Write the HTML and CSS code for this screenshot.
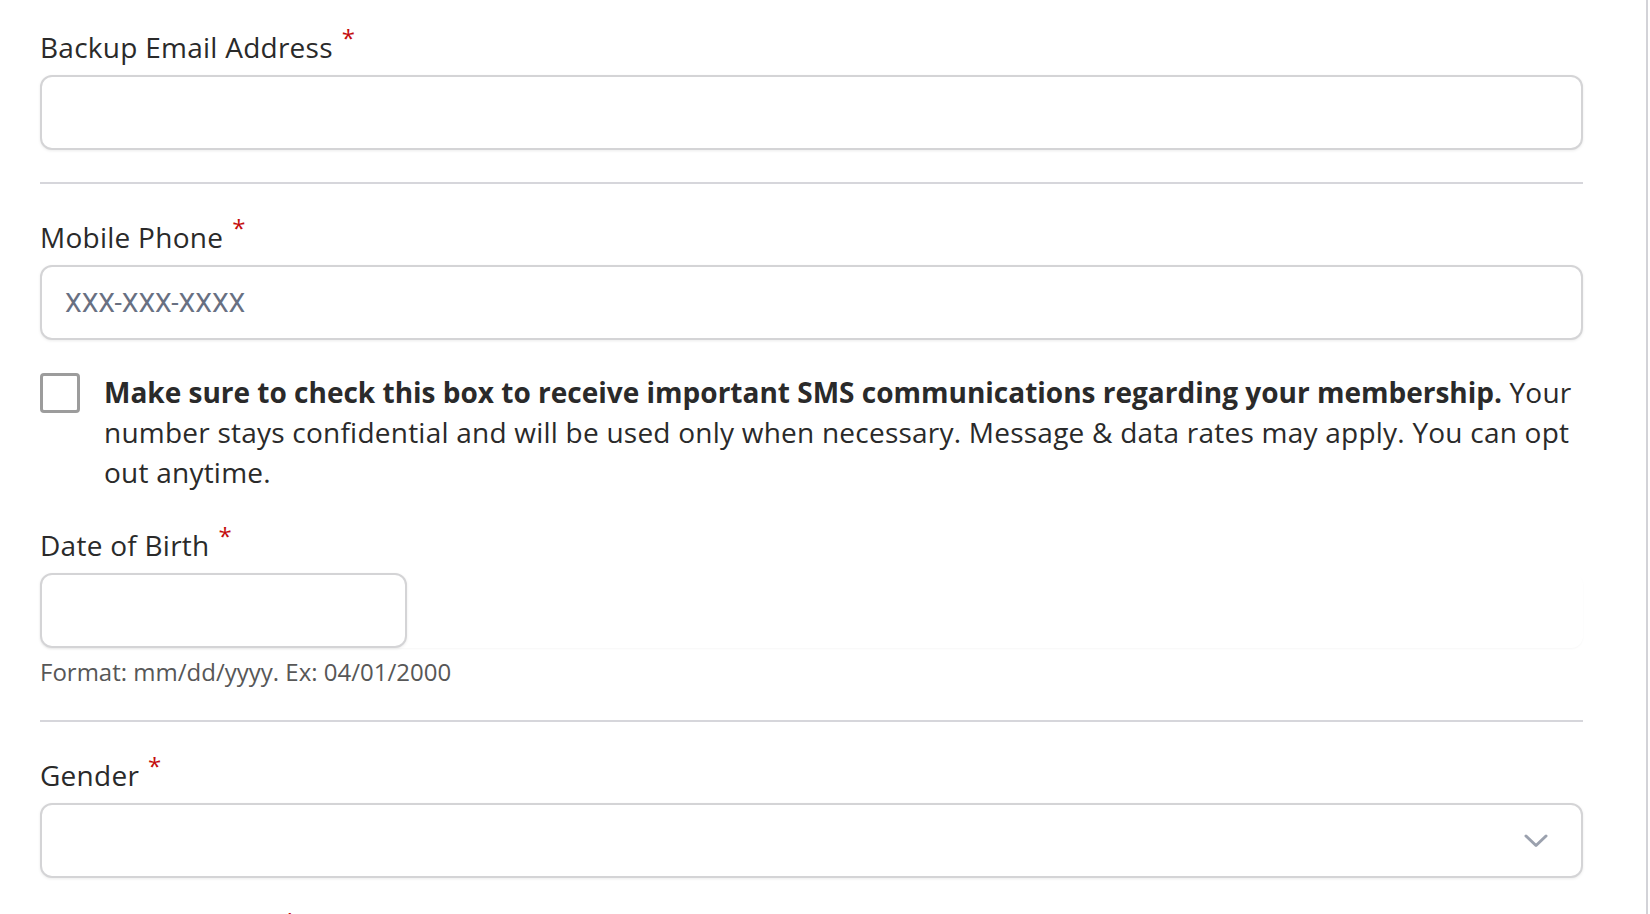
FILE: index.html
```html
<!DOCTYPE html>
<html lang="en">
<head>
<meta charset="utf-8">
<title>Member Details</title>
<link rel="stylesheet" href="styles.css">
</head>
<body>
<div class="page">
  <form class="form">
    <div class="field">
      <label class="label" for="backup-email">Backup Email Address<span class="req">*</span></label>
      <input class="input" id="backup-email" type="email">
    </div>

    <hr class="divider">

    <div class="field">
      <label class="label" for="mobile">Mobile Phone<span class="req">*</span></label>
      <input class="input" id="mobile" type="tel" placeholder="XXX-XXX-XXXX">
    </div>

    <label class="consent">
      <input class="checkbox" type="checkbox">
      <span class="consent-text"><strong>Make sure to check this box to receive important SMS communications regarding your membership.</strong> Your number stays confidential and will be used only when necessary. Message &amp; data rates may apply. You can opt out anytime.</span>
    </label>

    <div class="field">
      <label class="label" for="dob">Date of Birth<span class="req">*</span></label>
      <div class="dob-wrap">
        <input class="input input-dob" id="dob" type="text">
      </div>
      <p class="hint">Format: mm/dd/yyyy. Ex: 04/01/2000</p>
    </div>

    <hr class="divider">

    <div class="field">
      <label class="label" for="gender">Gender<span class="req">*</span></label>
      <div class="select-wrap">
        <select class="input select" id="gender">
          <option value=""></option>
          <option value="f">Female</option>
          <option value="m">Male</option>
          <option value="o">Other</option>
        </select>
        <svg class="chevron" width="24" height="14" viewBox="0 0 24 14" aria-hidden="true">
          <polyline points="2,2 12,11.5 22,2" fill="none" stroke="#9ba1ae" stroke-width="3" stroke-linecap="round" stroke-linejoin="round"/>
        </svg>
      </div>
    </div>

    <div class="field">
      <label class="label" for="language">Spoken Language<span class="req">*</span></label>
      <input class="input" id="language" type="text">
    </div>
  </form>
</div>
</body>
</html>
```

FILE: styles.css
```css
html, body {
  margin: 0;
  padding: 0;
  background: #ffffff;
}

body {
  font-family: "Open Sans", "Noto Sans", sans-serif;
  color: #2a2a2a;
  overflow: hidden;
}

.page {
  width: 1648px;
  min-height: 100vh;
  box-sizing: border-box;
  border-right: 2px solid #d3d3d8;
  padding: 26px 63px 40px 40px;
}

.form {
  display: flex;
  flex-direction: column;
  gap: 32px;
}

.field {
  display: flex;
  flex-direction: column;
}

.label {
  font-size: 28px;
  line-height: 42px;
  margin-bottom: 7px;
  letter-spacing: 0.26px;
  color: #2a2a2a;
}

.req {
  color: #c40d0d;
  font-size: 24px;
  margin-left: 9px;
  vertical-align: 11px;
  line-height: 1;
  letter-spacing: 0;
}

.input {
  display: block;
  width: 100%;
  height: 75px;
  box-sizing: border-box;
  margin: 0;
  border: 2px solid #d4d4d6;
  border-radius: 12px;
  background: #ffffff;
  box-shadow: 0 1px 3px rgba(0, 0, 0, 0.08);
  padding: 0 23px;
  font-family: Roboto, "Liberation Sans", sans-serif;
  font-size: 26.6px;
  color: #2a2a2a;
  outline: none;
}

.input::placeholder {
  color: #687082;
  opacity: 1;
}

.divider {
  margin: 0;
  border: 0;
  height: 2px;
  background: #d6d6db;
}

.consent {
  display: flex;
  align-items: flex-start;
  gap: 24px;
  font-size: 28px;
  line-height: 40px;
  letter-spacing: 0.23px;
  color: #2a2a2a;
}

.checkbox {
  appearance: none;
  -webkit-appearance: none;
  flex: none;
  width: 40px;
  height: 40px;
  margin: 1px 0 0;
  box-sizing: border-box;
  border: 3px solid #9c9c9c;
  border-radius: 4px;
  background: #ffffff;
}

.consent-text strong {
  font-weight: 700;
  letter-spacing: 0;
}

.dob-wrap {
  border-radius: 12px;
  box-shadow: 0 1px 2px rgba(0, 0, 0, 0.035);
}

.input-dob {
  width: 367px;
}

.hint {
  margin: 8px 0 0;
  font-size: 24px;
  line-height: 32px;
  color: #575757;
}

.select-wrap {
  position: relative;
}

.select {
  appearance: none;
  -webkit-appearance: none;
  cursor: pointer;
}

.chevron {
  position: absolute;
  right: 35px;
  top: 50%;
  margin-top: -7px;
  pointer-events: none;
}
```
